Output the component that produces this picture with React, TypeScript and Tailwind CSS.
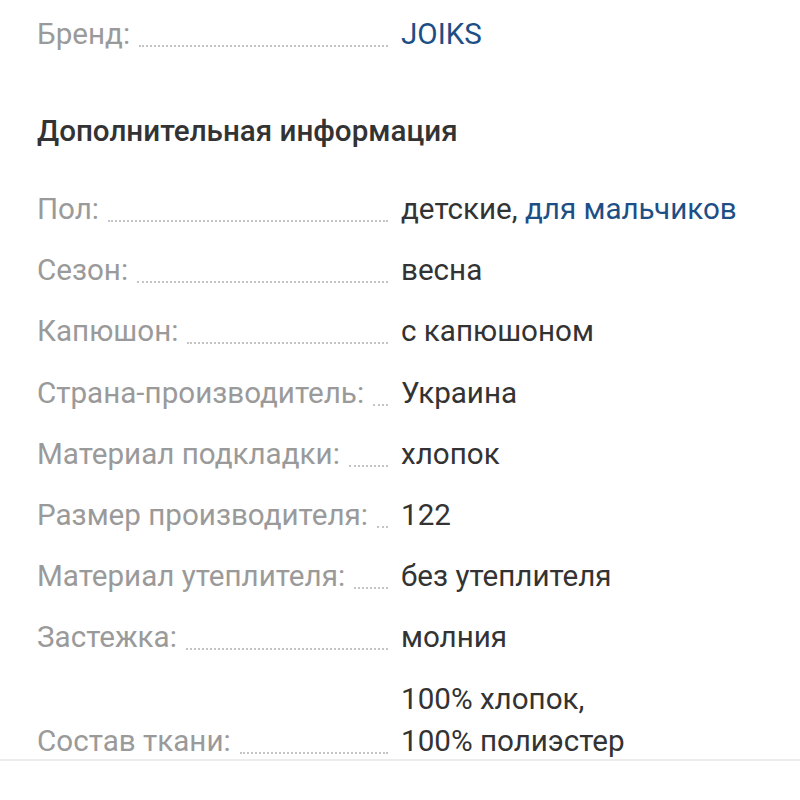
import React from "react";

type Row = { label: string; value: React.ReactNode };

const rows: Row[] = [
  {
    label: "Пол:",
    value: (
      <>
        детские, <span className="text-[#1d4f86]">для мальчиков</span>
      </>
    ),
  },
  { label: "Сезон:", value: "весна" },
  { label: "Капюшон:", value: "с капюшоном" },
  { label: "Страна-производитель:", value: "Украина" },
  { label: "Материал подкладки:", value: "хлопок" },
  { label: "Размер производителя:", value: "122" },
  { label: "Материал утеплителя:", value: "без утеплителя" },
  { label: "Застежка:", value: "молния" },
  {
    label: "Состав ткани:",
    value: (
      <>
        100% хлопок,
        <br />
        100% полиэстер
      </>
    ),
  },
];

function Line({ label, value }: Row) {
  return (
    <div className="flex items-end">
      <div className="flex w-[351px] shrink-0 items-end">
        <span className="text-[#9a9a9a] whitespace-nowrap">{label}</span>
        <span className="ml-[9px] mb-[8px] flex-1 min-w-[6px] border-b-[2px] border-dotted border-[#c4c4c4]"></span>
      </div>
      <div className="ml-[13px] text-[#333333] whitespace-nowrap">{value}</div>
    </div>
  );
}

export default function App() {
  return (
    <div
      className="min-h-[800px] w-[800px] bg-white text-[29.6px] leading-[42px]"
      style={{ fontFamily: "Roboto, 'Noto Sans', sans-serif" }}
    >
      <div className="px-[37px] pt-[13px]">
        <Line label="Бренд:" value={<span className="text-[#1d4f86]">JOIKS</span>} />
        <h2 className="mt-[60px] text-[29.6px] leading-[32px] font-medium text-[#333333]">
          Дополнительная информация
        </h2>
        <div className="mt-[41px] flex flex-col gap-[19.2px]">
          {rows.map((r) => (
            <Line key={r.label} {...r} />
          ))}
        </div>
      </div>
      <div className="-mt-[3px] h-[2px] w-full bg-[#ececec]"></div>
    </div>
  );
}
